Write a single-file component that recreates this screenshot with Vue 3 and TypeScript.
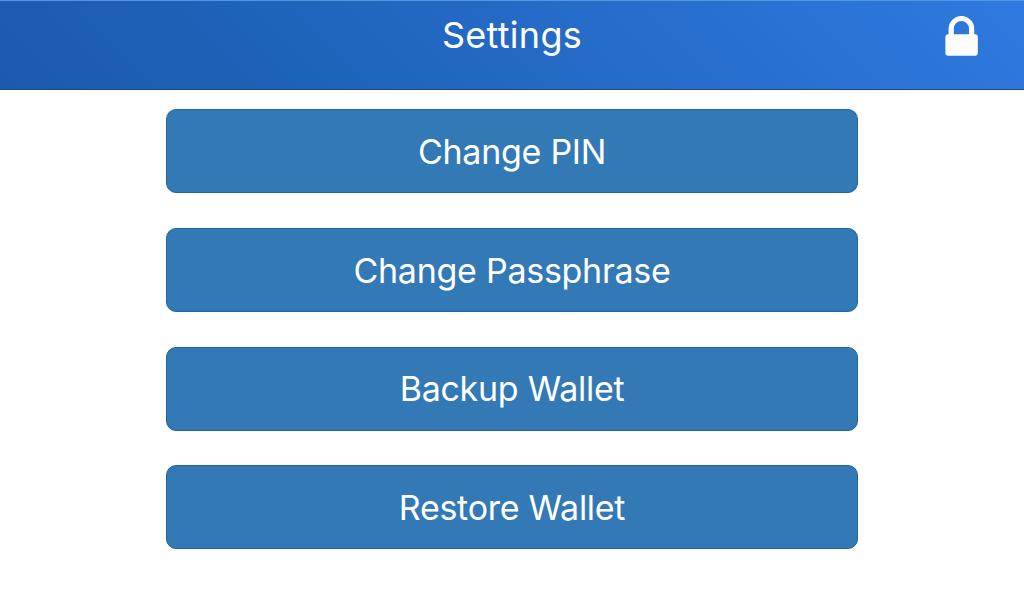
<script
  setup
  lang="ts"
>
import { ref } from 'vue'

interface SettingsAction {
  id: string
  label: string
}

const title = 'Settings'

const actions: SettingsAction[] = [
  { id: 'pin', label: 'Change PIN' },
  { id: 'passphrase', label: 'Change Passphrase' },
  { id: 'backup', label: 'Backup Wallet' },
  { id: 'restore', label: 'Restore Wallet' }
]

const selected = ref<string | null>(null)

function select(action: SettingsAction) {
  selected.value = action.id
}
</script>

<template>
  <div class="settings-page">
    <header class="navbar">
      <h1 class="navbar-title">{{ title }}</h1>
      <button
        type="button"
        class="lock-button"
        aria-label="Lock wallet"
      >
        <svg
          class="lock-icon"
          viewBox="0 0 34 40"
          aria-hidden="true"
        >
          <path
            d="M6.2 20V12.7a10.2 10.2 0 0 1 20.4 0V20"
            fill="none"
            stroke="#fff"
            stroke-width="5.2"
          />
          <rect
            x="0.4"
            y="18.3"
            width="32.4"
            height="21.5"
            rx="2.8"
            fill="#fff"
          />
        </svg>
      </button>
    </header>

    <main class="actions">
      <button
        v-for="action in actions"
        :key="action.id"
        type="button"
        class="action-button"
        @click="select(action)"
      >
        {{ action.label }}
      </button>
    </main>
  </div>
</template>

<style>
body {
  margin: 0;
  background: #fff;
}
</style>

<style scoped>
.settings-page {
  box-sizing: border-box;
  height: 594px;
  overflow: hidden;
  background: #fff;
  font-family: Inter, "Liberation Sans", sans-serif;
  color: #fff;
}

/* Header */
.navbar {
  box-sizing: border-box;
  display: grid;
  grid-template-columns: 1fr auto 1fr;
  align-items: start;
  height: 90px;
  padding: 0 45px;
  border-top: 1px solid #5594e0;
  border-bottom: 1px solid #184c92;
  background: linear-gradient(45deg, #1c5aae 0%, #1d62b8 25%, #256bc7 55%, #2f7ae0 100%);
}

.navbar-title {
  grid-column: 2;
  margin: 12px 0 0;
  font-size: 36px;
  font-weight: 400;
  line-height: 44px;
  letter-spacing: 0.3px;
}

.lock-button {
  justify-self: end;
  margin: 15px 0 0;
  padding: 0;
  border: 0;
  background: none;
}

.lock-icon {
  display: block;
  width: 34px;
  height: 40px;
}

/* Buttons */
.actions {
  display: flex;
  flex-direction: column;
  align-items: center;
  gap: 34.7px;
  padding-top: 19.4px;
}

.action-button {
  box-sizing: border-box;
  flex: none;
  width: 692px;
  height: 84px;
  padding: 1px 0 0;
  border: 1px solid #22649f;
  border-radius: 10px;
  background: #3279b6;
  color: #fff;
  font-family: inherit;
  font-size: 34px;
  font-weight: 400;
  line-height: 44px;
  letter-spacing: -0.27px;
}
</style>
